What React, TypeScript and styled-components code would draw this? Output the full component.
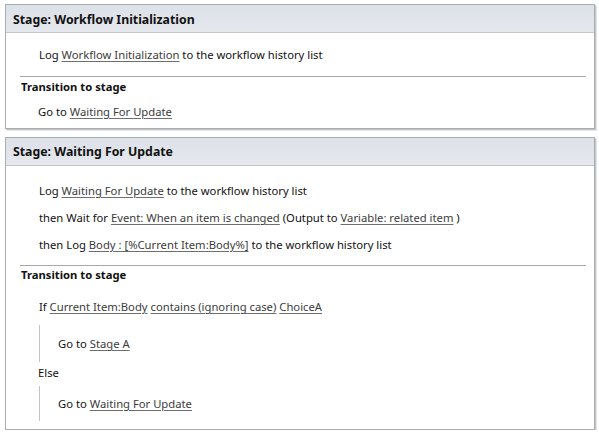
import styled, { createGlobalStyle } from 'styled-components';

const Global = createGlobalStyle`
  body {
    margin: 0;
    background: #ffffff;
    font-family: "Noto Sans", "Open Sans", sans-serif;
    font-size: 11.25px;
    color: #111;
  }
`;

const Page = styled.div`
  padding: 4px 0 0 5px;
  display: flex;
  flex-direction: column;
  gap: 8px;
  width: 590px;
`;

const Stage = styled.div`
  border: 1px solid #a9acb0;
  box-shadow: 1px 1px 0 #c4c6c8, 2px 2px 0 #e4e5e6;
  background: #fff;
  display: flex;
  flex-direction: column;
`;

const Header = styled.div<{ $shift: number }>`
  height: ${(p) => 27 - p.$shift}px;
  line-height: ${(p) => 27 - p.$shift}px;
  padding: ${(p) => p.$shift}px 0 0 7px;
  background: linear-gradient(#dde1e8, #e5e8ed);
  border-bottom: 1px solid #c3c6cb;
  font-weight: bold;
  font-size: 12.3px;
  color: #111;
`;

const Body = styled.div<{ $top: number; $bottom: number }>`
  display: flex;
  flex-direction: column;
  padding: ${(p) => p.$top}px 8px ${(p) => p.$bottom}px 14px;
`;

const Line = styled.div<{ $h: number; $indent?: number; $mt?: number }>`
  height: ${(p) => p.$h}px;
  line-height: ${(p) => p.$h}px;
  margin-top: ${(p) => p.$mt ?? 0}px;
  padding-left: ${(p) => p.$indent ?? 19}px;
  white-space: pre;
`;

const Link = styled.span`
  color: #3c3c3c;
  text-decoration: underline;
  text-decoration-color: #6e6e6e;
  text-underline-offset: 2px;
`;

const Rule = styled.div<{ $mt: number }>`
  border-top: 1px solid #a8a8a8;
  margin-top: ${(p) => p.$mt}px;
`;

const Heading = styled.div<{ $h: number }>`
  height: ${(p) => p.$h}px;
  line-height: ${(p) => p.$h}px;
  font-weight: bold;
  padding-left: 1px;
`;

const Branch = styled.div<{ $h: number; $mt: number }>`
  margin: ${(p) => p.$mt}px 0 0 19px;
  border-left: 1px solid #c4c4c4;
  padding-left: 18px;
  height: ${(p) => p.$h}px;
  line-height: ${(p) => p.$h}px;
  white-space: pre;
`;

export default function App() {
  return (
    <>
      <Global />
      <Page>
        <Stage>
          <Header $shift={3}>Stage: Workflow Initialization</Header>
          <Body $top={8} $bottom={1}>
            <Line $h={28}>Log <Link>Workflow Initialization</Link> to the workflow history list</Line>
            <Rule $mt={7} />
            <Heading $h={19}>Transition to stage</Heading>
            <Line $h={31} $indent={18}>Go to <Link>Waiting For Update</Link></Line>
          </Body>
        </Stage>
        <Stage>
          <Header $shift={1}>Stage: Waiting For Update</Header>
          <Body $top={11} $bottom={8}>
            <Line $h={28}>Log <Link>Waiting For Update</Link> to the workflow history list</Line>
            <Line $h={26}>then Wait for <Link>Event: When an item is changed</Link> (Output to <Link>Variable: related item</Link> )</Line>
            <Line $h={28}>then Log <Link>Body : [%Current Item:Body%]</Link> to the workflow history list</Line>
            <Rule $mt={6} />
            <Heading $h={18}>Transition to stage</Heading>
            <Line $h={26} $mt={10}>If <Link>Current Item:Body</Link> <Link>contains (ignoring case)</Link> <Link>ChoiceA</Link></Line>
            <Branch $h={37} $mt={5}>Go to <Link>Stage A</Link></Branch>
            <Line $h={22} $indent={18}>Else</Line>
            <Branch $h={35} $mt={2}>Go to <Link>Waiting For Update</Link></Branch>
          </Body>
        </Stage>
      </Page>
    </>
  );
}
